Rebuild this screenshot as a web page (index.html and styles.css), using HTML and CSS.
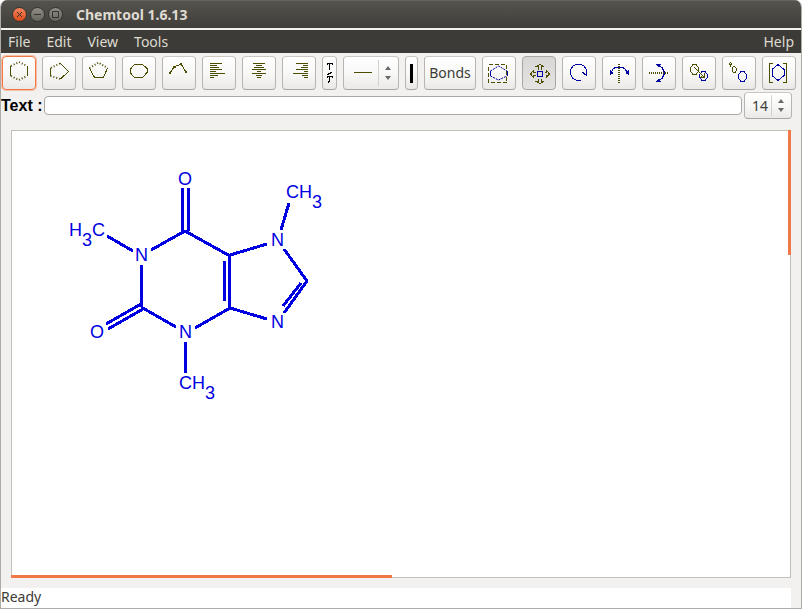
FILE: index.html
```html
<!DOCTYPE html>
<html lang="en">
<head>
<meta charset="utf-8">
<title>Chemtool 1.6.13</title>
<link rel="stylesheet" href="styles.css">
</head>
<body>
<div class="window">
  <header class="titlebar">
    <button class="wm wm-close" type="button" aria-label="Close"><svg viewBox="0 0 15 15"><path d="M5 5l5 5M10 5l-5 5"/></svg></button>
    <button class="wm" type="button" aria-label="Minimize"><svg viewBox="0 0 15 15"><path d="M4 7.500h7"/></svg></button>
    <button class="wm" type="button" aria-label="Maximize"><svg viewBox="0 0 15 15"><path d="M4.500 4.500h6v6h-6z"/></svg></button>
    <h1 class="title">Chemtool 1.6.13</h1>
  </header>
  <nav class="menubar">
    <a href="#">File</a><a href="#">Edit</a><a href="#">View</a><a href="#">Tools</a><a class="help" href="#">Help</a>
  </nav>
  <div class="toolbar">
    <button class="tool focused" type="button" aria-label="Hexagon"><svg class="icon" viewBox="1 1 32 32"><path d="M8.500 10v10M25.500 10v10"/><path class="dots" d="M9 10l8-4 8 4M9 20l8 4 8-4"/></svg></button>
    <button class="tool" type="button" aria-label="Rotated pentagon"><svg class="icon" viewBox="1 1 32 32"><path d="M18.500 7.500l8 8-8 7.500"/><path class="dots" d="M18 7.500L8.500 12M8.500 20l10 3"/><path d="M8.500 12v8"/></svg></button>
    <button class="tool" type="button" aria-label="Pentagon"><svg class="icon" viewBox="1 1 32 32"><path d="M7.500 12l5 9.500h9l4-9.500"/><path class="dots" d="M7.500 12l9-5.500 9 5.500"/></svg></button>
    <button class="tool" type="button" aria-label="Octagon"><svg class="icon" viewBox="1 1 32 32"><path d="M12.500 8.500h8l4.500 4v4l-4.500 5h-8l-4.500-5v-3z"/></svg></button>
    <button class="tool" type="button" aria-label="Chain"><svg class="icon" viewBox="1 1 32 32"><path d="M8 17l4-6 7-3 5 8"/><path class="fill" d="M7 16h2v2H7zM11 10h3v2h-3zM18 7h2v2h-2zM23 15h2v2h-2z"/></svg></button>
    <button class="tool" type="button" aria-label="Align left"><svg class="icon" viewBox="1 1 32 32"><path d="M8 7.500h12M8 9.500h7M8 11.500h9M8 13.500h12M8 15.500h6M8 17.500h15M8 19.500h8M8 21.500h4"/></svg></button>
    <button class="tool" type="button" aria-label="Align center"><svg class="icon" viewBox="1 1 32 32"><path d="M11 7.500h12M14 9.500h6M12 11.500h10M10 13.500h14M15 15.500h4M10 17.500h14M14 19.500h6M15 21.500h4"/></svg></button>
    <button class="tool" type="button" aria-label="Align right"><svg class="icon" viewBox="1 1 32 32"><path d="M14 7.500h12M21 9.500h5M19 11.500h7M14 13.500h12M22 15.500h4M11 17.500h15M20 19.500h6M22 21.500h4"/></svg></button>
    <button class="tool narrow" type="button" aria-label="Text style"><svg class="icon ink" viewBox="1 1 13 32"><path d="M5 9V7.500h5V9M7.500 7v7M5 18.500h1l1-1h1l1-1h1M5 22v-1.500h5V22M7.500 21v3l-1 3"/></svg></button>
    <div class="option line-option">
      <select aria-label="Line type"><option aria-label="Single bond"></option></select>
      <svg class="face" viewBox="0 0 56 34"><path class="olive" d="M11 16.500h18"/><path class="sep" d="M35.500 4v26"/><path class="arrow" d="M42 14h6l-3-4zM42 20h6l-3 4z"/></svg>
    </div>
    <button class="tool slim" type="button" aria-label="Color"><svg class="icon" viewBox="1 1 11 32"><path class="black" d="M5 8h3v19H5z"/></svg></button>
    <button class="tool bonds" type="button">Bonds</button>
    <button class="tool" type="button" aria-label="Select"><svg class="icon" viewBox="1 1 32 32"><path class="dash" d="M6.500 8.500h18v18h-18z"/><path class="blue" d="M8.500 15v5M25 15v5"/><path class="dots blue" d="M8.500 15l8-5 8.500 5M8.500 20l8 4 8.500-4"/></svg></button>
    <button class="tool pressed" type="button" aria-label="Move"><svg class="icon" viewBox="1 1 32 32"><path class="blue" d="M15.500 15.500h5v5h-5z"/><path d="M16.500 13.500v-3h-2l3.500-2 3.500 2h-2v3M16.500 22.500v3h-2l3.500 2 3.500-2h-2v-3M13.500 16.500h-2v-2l-3 3.500 3 3.500v-2h2M22.500 16.500h2v-2l3 3.500-3 3.500v-2h2"/></svg></button>
    <button class="tool" type="button" aria-label="Rotate"><svg class="icon" viewBox="1 1 32 32"><path class="blue" d="M18.500 24.500h-4l-4-2.500-2-4v-4l2.500-4 3.500-2h4l3.500 2 2 3 .5 7M24.500 14v5M20 16l4 3"/></svg></button>
    <button class="tool" type="button" aria-label="Flip horizontally"><svg class="icon" viewBox="1 1 32 32"><path class="bar" d="M17 8v19"/><path class="blue" d="M9 17l2-4 3-2h6l3 2 3 4"/><path class="bluefill" d="M8 14v5l4-2zM27 14v5l-4-2z"/></svg></button>
    <button class="tool" type="button" aria-label="Flip vertically"><svg class="icon" viewBox="1 1 32 32"><path class="bar" d="M7 17h19"/><path class="blue" d="M16 9l4 2.500 2 4v3l-2 4-4 2.500"/><path class="bluefill" d="M14 8h5l-2 4zM14 26h5l-2-4z"/></svg></button>
    <button class="tool" type="button" aria-label="Copy"><svg class="icon" viewBox="1 1 32 32"><path d="M11 8.500h3l2.500 3v4l-2.500 3h-3l-2.500-3v-4z"/><path class="blue" d="M20 15.500h3l2.500 3v3l-2.500 3h-3l-2.500-3v-3z"/><path d="M12 11l10 10M22.500 17v4.500H18M21 19l-2 2"/></svg></button>
    <button class="tool" type="button" aria-label="Rescale"><svg class="icon" viewBox="1 1 32 32"><path d="M8.500 6.500l1 1-1 2-1-2zM11.500 10.500h1l2 2v2l-1.500 2h-1.500l-1.500-2v-2z"/><path class="blue" d="M19 15.500h3l2.500 3v4l-2.500 3h-3l-2.500-3v-4z"/></svg></button>
    <button class="tool" type="button" aria-label="Brackets"><svg class="icon" viewBox="1 1 32 32"><path d="M11 7.500H7.500v19H11M21 7.500h3.500v19H21"/><path class="blue" d="M16 8.500l6 5v6l-6 5-6-5v-6z"/></svg></button>
  </div>
  <div class="textrow">
    <label for="text">Text :</label>
    <input id="text" type="text">
    <div class="option size-option">
      <select aria-label="Font size"><option>14</option></select>
      <svg class="face" viewBox="0 0 48 27"><path class="sep" d="M27.500 3v21"/><path class="arrow" d="M34 11h6l-3-4zM34 16h6l-3 4z"/></svg>
    </div>
  </div>
  <main class="canvas">
    <svg class="molecule" viewBox="12 131 330 290" role="img" aria-label="Caffeine">
      <g class="bond">
        <path d="M107 236l26 15M151 250l34-19M141.500 265v42M182.500 188v43M188.500 188v43M185 231l45 25"/>
        <path d="M230 255l37-11M229.500 255v53M224.500 261v40M281 230l8-27M284 249l23 32M307 281l-23 32M301 283l-18 23"/>
        <path d="M230 308l37 11M230 308l-35 20M185.500 342v31M141 307l35 20M141 304l-35 20M143 309l-35 20"/>
      </g>
      <g class="atom">
        <text x="178" y="185">O</text>
        <text x="286" y="198">CH</text><text x="312" y="208">3</text>
        <text x="69" y="236">H</text><text x="82" y="246">3</text><text x="92" y="236">C</text>
        <text x="135" y="261">N</text>
        <text x="271" y="246">N</text>
        <text x="271" y="328">N</text>
        <text x="90" y="338">O</text>
        <text x="179" y="338">N</text>
        <text x="179" y="389">CH</text><text x="205" y="399">3</text>
      </g>
    </svg>
    <div class="thumb thumb-y"></div>
    <div class="thumb thumb-x"></div>
  </main>
  <footer class="status">Ready</footer>
</div>
</body>
</html>
```
FILE: styles.css
```css
* { box-sizing: border-box; }
body { margin: 0; background: #fff; font: 14px/20px "Noto Sans", "Open Sans", sans-serif; color: #3c3b37; }
button, select, input { font: inherit; color: inherit; margin: 0; padding: 0; }
.window { display: flex; flex-direction: column; min-height: 100vh; background: #f2f1f0; border: solid #aeaca6; border-width: 0 1px 1px; border-radius: 7px 7px 0 0; overflow: hidden; }
.titlebar { display: flex; align-items: center; gap: 3px; height: 28px; margin: 0 -1px; padding-left: 12px; background: linear-gradient(#55534d, #3f3e3a); border-top: 1px solid #66645c; }
.wm { width: 15px; height: 15px; border: 1px solid #353430; border-radius: 50%; background: linear-gradient(#8f8d84, #67655d); }
.wm-close { background: linear-gradient(#f5845c, #dd4a1c); }
.wm svg { display: block; width: 15px; height: 15px; margin: -1px; fill: none; stroke: #33322f; }
.title { margin: 0 0 0 10px; font-size: 14px; line-height: 20px; font-weight: 700; color: #dfdbd2; }
.menubar { display: flex; gap: 16px; height: 25px; padding: 0 7px; border-top: 2px solid #f2f1f0; background: #3c3b37; line-height: 23px; }
.menubar a { color: #dfdbd2; text-decoration: none; }
.menubar .help { margin-left: auto; }
.toolbar { display: flex; gap: 6px; padding: 3px 1px 2px; }
.tool, .option { flex: none; border: 1px solid #b8b5b0; border-top-color: #cbc8c3; border-bottom-color: #a9a6a2; border-radius: 4px; background: linear-gradient(#fff, #f8f8f7 50%, #eae9e8); }
.tool { width: 34px; height: 34px; }
.tool.focused { border-color: #f07746; box-shadow: 0 0 0 1px #f6bda7; }
.tool.pressed { background: linear-gradient(#d8d7d5, #e4e3e1); border-color: #a9a6a2; }
.tool.narrow { width: 15px; }
.tool.slim { width: 13px; }
.tool.bonds { width: 52px; }
.icon { display: block; width: 100%; height: 32px; fill: none; stroke: #4d4d00; shape-rendering: crispEdges; }
.icon.ink { stroke: #000; }
.icon .dots { stroke-dasharray: 1 2; shape-rendering: auto; stroke-width: 2; }
.icon .dash { stroke-dasharray: 4 2; }
.icon .bar { stroke-width: 2; stroke-dasharray: 1 1; }
.icon .blue { stroke: #0000a0; }
.icon .dots.blue { stroke-width: 1; stroke-dasharray: 2 1; }
.icon .fill { fill: #4d4d00; stroke: none; }
.icon .bluefill { fill: #0000a0; stroke: none; }
.icon .black { fill: #000; stroke: none; }
.option { position: relative; }
.option select { width: 100%; height: 100%; border: 0; background: transparent; appearance: none; }
.line-option { width: 56px; height: 34px; }
.size-option { width: 48px; height: 27px; }
.size-option select { padding-left: 7px; }
.face { position: absolute; inset: -1px; pointer-events: none; shape-rendering: crispEdges; }
.face .olive { stroke: #4d4d00; }
.face .sep { stroke: #d3d1ce; }
.face .arrow { fill: #6b6a68; shape-rendering: auto; }
.textrow { display: flex; align-items: center; gap: 2px; margin-right: 9px; }
.textrow label { font: bold 16px/20px "Liberation Sans", Arial, sans-serif; color: #000; }
.textrow input { flex: 1; min-width: 0; height: 19px; padding: 0 4px; border: 1px solid #aaa8a5; border-radius: 4px; background: #fff; }
.canvas { position: relative; flex: 1; margin: 11px 10px 10px; border: 1px solid #c2c0bb; background: #fff; }
.molecule { display: block; width: 330px; height: 290px; }
.bond { fill: none; stroke: #0000e0; stroke-width: 3; shape-rendering: crispEdges; }
.atom { fill: #0000e0; font: 18px "Liberation Sans", Arial, sans-serif; }
.thumb { position: absolute; background: #f07746; }
.thumb-y { top: -1px; right: -1px; width: 3px; height: 28%; }
.thumb-x { left: -1px; bottom: -1px; height: 3px; width: 49%; }
.status { height: 20px; margin-right: 10px; line-height: 18px; background: #fff; }
```
